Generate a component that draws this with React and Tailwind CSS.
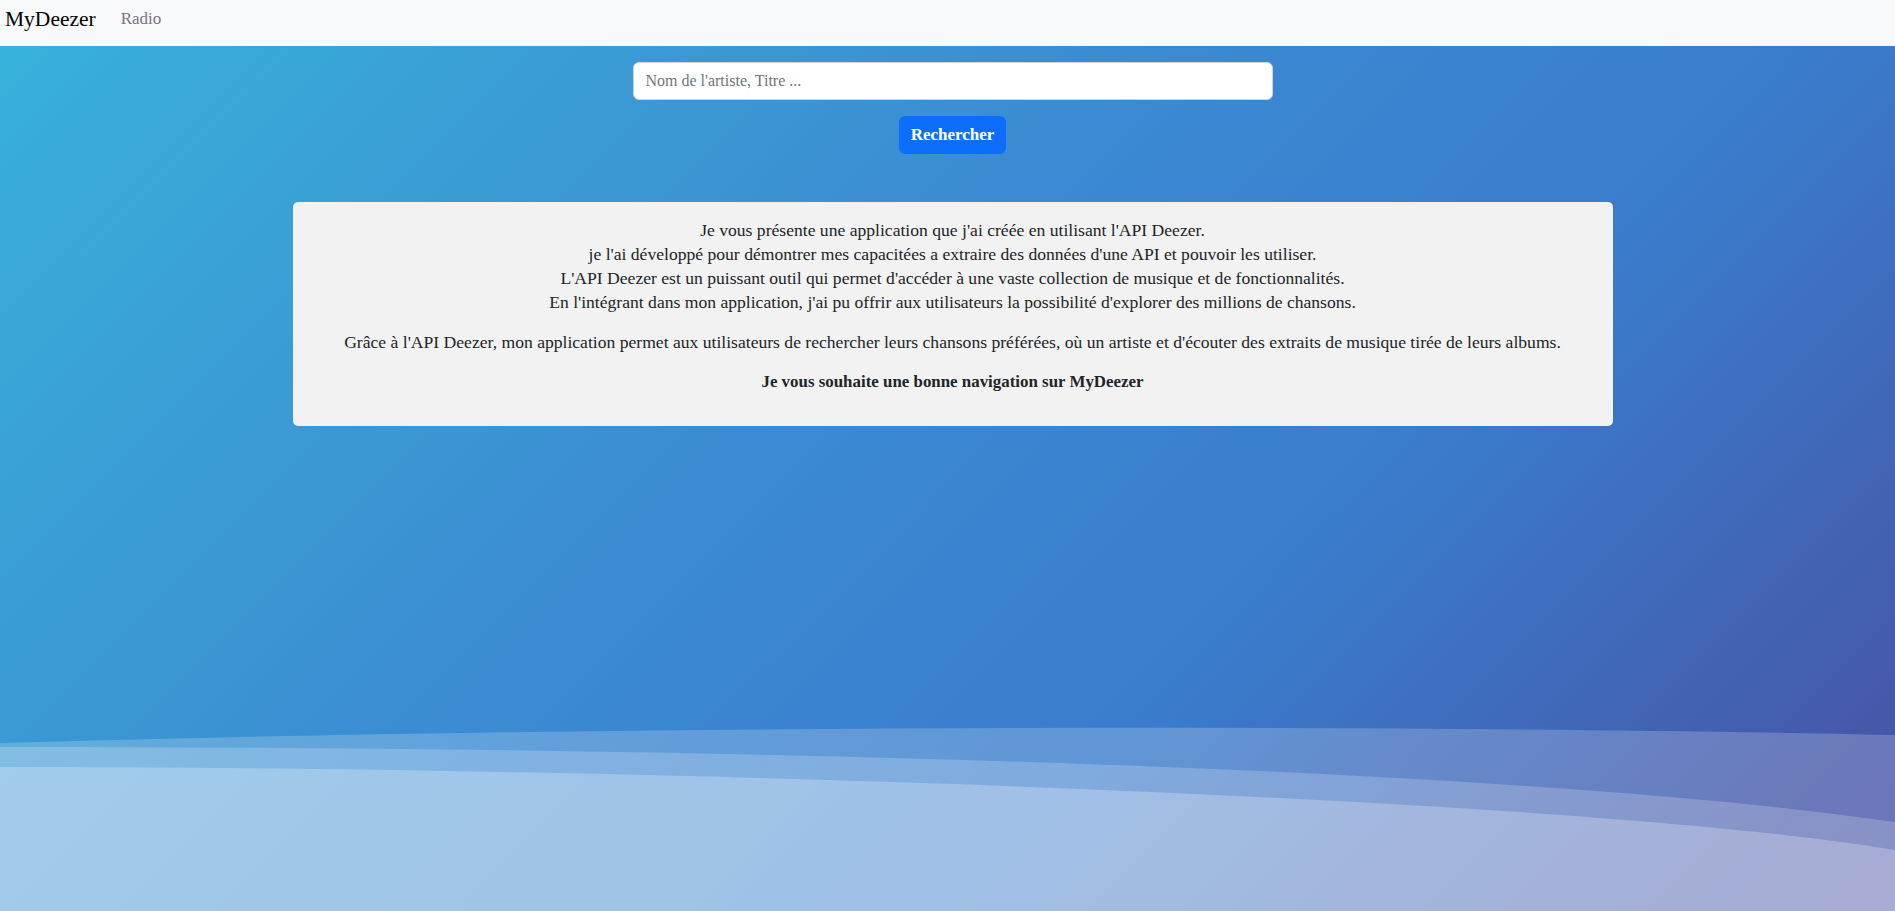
import React, { useState } from "react";

const serif = "font-['Liberation_Serif',Georgia,serif]";

const Waves = () => (
  <svg
    className="absolute bottom-0 left-0 w-full h-[211px]"
    viewBox="0 700 1895 211"
    preserveAspectRatio="none"
  >
    <path d="M0 743 C500 728, 1300 722, 1895 735 L1895 911 L0 911 Z" fill="#ffffff" fillOpacity="0.2" />
    <path d="M0 747 C700 747, 1500 765, 1895 822 L1895 911 L0 911 Z" fill="#ffffff" fillOpacity="0.2" />
    <path d="M0 767 C700 767, 1600 800, 1895 850 L1895 911 L0 911 Z" fill="#ffffff" fillOpacity="0.25" />
  </svg>
);

export default function App() {
  const [query, setQuery] = useState("");

  return (
    <div className={`min-h-screen flex flex-col ${serif} text-[#212529]`}>
      {/* Navbar */}
      <nav className="h-[46px] shrink-0 bg-[#f8f9fa] flex items-start pt-[4px] pl-[5px]">
        <span className="text-[21.5px] leading-[30px] text-black">MyDeezer</span>
        <a className="ml-[25px] text-[17px] leading-[30px] text-[#7d7184]">Radio</a>
      </nav>

      {/* Main */}
      <main className="relative flex-1 overflow-hidden bg-[linear-gradient(135deg,#37b1da_0%,#3b98d4_26%,#3b86d1_48%,#3a7ccc_66%,#4559ab_92%,#4852a6_100%)]">
        <Waves />
        <div className="relative flex flex-col items-center pl-[10px] pt-[16px]">
          <input
            type="text"
            value={query}
            onChange={(e) => setQuery(e.target.value)}
            placeholder="Nom de l'artiste, Titre ..."
            className="w-[640px] h-[38px] px-3 bg-white border border-[#ced4da] rounded-[6px] text-[16px] placeholder:text-[#6c757d] outline-none"
          />
          <button className="mt-4 h-[38px] px-3 rounded-[6px] bg-[#0d6efd] text-white font-bold text-[17px]">
            Rechercher
          </button>

          {/* Intro card */}
          <div className="mt-12 w-[1320px] bg-[#f2f2f2] rounded-[5px] p-4 text-center text-[17.6px] leading-[24px]">
            <p className="mb-4">
              Je vous présente une application que j'ai créée en utilisant l'API Deezer.
              <br />
              je l'ai développé pour démontrer mes capacitées a extraire des données d'une API et pouvoir les utiliser.
              <br />
              L'API Deezer est un puissant outil qui permet d'accéder à une vaste collection de musique et de fonctionnalités.
              <br />
              En l'intégrant dans mon application, j'ai pu offrir aux utilisateurs la possibilité d'explorer des millions de chansons.
            </p>
            <p className="mb-4">
              Grâce à l'API Deezer, mon application permet aux utilisateurs de rechercher leurs chansons préférées, où un artiste et d'écouter des extraits de musique tirée de leurs albums.
            </p>
            <p className="mb-4 font-bold text-[16.9px]">Je vous souhaite une bonne navigation sur MyDeezer</p>
          </div>
        </div>
      </main>
    </div>
  );
}
